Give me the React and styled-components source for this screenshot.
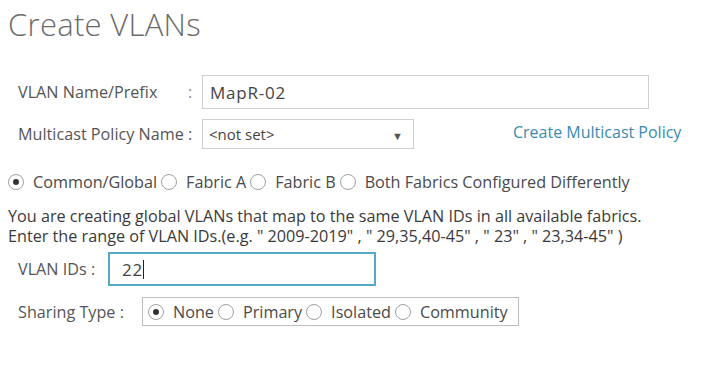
import React from 'react';
import styled, { createGlobalStyle } from 'styled-components';

const GlobalStyle = createGlobalStyle`
  body {
    margin: 0;
    background: #ffffff;
    font-family: "Open Sans", "Liberation Sans", Arial, sans-serif;
    color: #4a4a4a;
  }
`;

const Page = styled.div`
  width: 702px;
  height: 387px;
  padding: 5px 0 0 8px;
  box-sizing: border-box;
  overflow: hidden;
`;

const Title = styled.h1`
  margin: 0;
  font-size: 31px;
  font-weight: 300;
  color: #6b6b6b;
  line-height: 39px;
  letter-spacing: 0.3px;
`;

const Form = styled.div`
  display: flex;
  flex-direction: column;
  margin-top: 31px;
  padding-left: 10px;
`;

const Row = styled.div`
  display: flex;
  align-items: center;
  height: ${(p) => p.h || 34}px;
  margin-top: ${(p) => p.mt || 0}px;
  margin-bottom: ${(p) => p.mb || 0}px;
`;

const Label = styled.span`
  font-size: 16.2px;
  color: #555;
  width: ${(p) => (p.w ? `${p.w}px` : 'auto')};
  flex-shrink: 0;
  white-space: nowrap;
`;

const Colon = styled.span`
  font-size: 16px;
  color: #888;
  width: 14px;
`;

const TextInput = styled.div`
  box-sizing: border-box;
  width: ${(p) => p.w}px;
  height: ${(p) => p.h}px;
  border: ${(p) => (p.focus ? '2px solid #55aacb' : '1px solid #d0d0d0')};
  display: flex;
  align-items: center;
  padding-left: ${(p) => (p.focus ? 12 : 7)}px;
  font-size: 17px;
  color: #444;
  letter-spacing: 0.8px;
`;

const Caret = styled.span`
  display: inline-block;
  width: 1px;
  height: 19px;
  background: #222;
`;

const Select = styled.div`
  box-sizing: border-box;
  width: 212px;
  height: 30px;
  border: 1px solid #d0d0d0;
  display: flex;
  align-items: center;
  justify-content: space-between;
  padding: 0 10px 0 6px;
  font-size: 15px;
  color: #444;
`;

const Arrow = styled.span`
  font-size: 11px;
  color: #555;
  margin-top: 2px;
`;

const Link = styled.a`
  margin-left: 99px;
  font-size: 16px;
  color: #3a8bae;
  text-decoration: none;
  margin-top: -4px;
  white-space: nowrap;
`;

const RadioGroup = styled.div`
  display: flex;
  align-items: center;
  gap: 4px;
  font-size: 16.2px;
  line-height: 20px;
  color: #4a4a4a;
  white-space: nowrap;
`;

const RadioItem = styled.label`
  display: flex;
  align-items: center;
  gap: 9px;
`;

const Circle = styled.span`
  box-sizing: border-box;
  width: 16px;
  height: 16px;
  border-radius: 50%;
  border: 1px solid #a0a0a0;
  display: flex;
  align-items: center;
  justify-content: center;
  &::after {
    content: '';
    width: 6px;
    height: 6px;
    border-radius: 50%;
    background: ${(p) => (p.checked ? '#333' : 'transparent')};
  }
`;

const ScopeRow = styled.div`
  margin: 23px 0 0 -10px;
`;

const Note = styled.p`
  margin: 14px 0 0 -10px;
  font-size: 16.2px;
  line-height: 20px;
  color: #3a3a3a;
  white-space: nowrap;
`;

const ShareBox = styled.div`
  box-sizing: border-box;
  height: 29px;
  width: 377px;
  border: 1px solid #bdbdbd;
  display: flex;
  align-items: center;
  padding-left: 5px;
`;

const Radio = ({ checked, children }) => (
  <RadioItem>
    <Circle checked={checked} />
    {children}
  </RadioItem>
);

export default function App() {
  return (
    <Page>
      <GlobalStyle />
      <Title>Create VLANs</Title>
      <Form>
        <Row h={34} mb={10}>
          <Label w={170}>VLAN Name/Prefix</Label>
          <Colon>:</Colon>
          <TextInput w={447} h={34}>MapR-02</TextInput>
        </Row>
        <Row h={30}>
          <Label w={184}>Multicast Policy Name :</Label>
          <Select>
            <span>&lt;not set&gt;</span>
            <Arrow>▼</Arrow>
          </Select>
          <Link href="#">Create Multicast Policy</Link>
        </Row>
        <ScopeRow>
          <RadioGroup>
            <Radio checked>Common/Global</Radio>
            <Radio>Fabric A</Radio>
            <Radio>Fabric B</Radio>
            <Radio>Both Fabrics Configured Differently</Radio>
          </RadioGroup>
        </ScopeRow>
        <Note>
          You are creating global VLANs that map to the same VLAN IDs in all available fabrics.
          <br />
          Enter the range of VLAN IDs.(e.g. " 2009-2019" , " 29,35,40-45" , " 23" , " 23,34-45" )
        </Note>
        <Row h={34} mt={6} mb={11}>
          <Label w={90}>VLAN IDs :</Label>
          <TextInput w={268} h={34} focus>
            22<Caret />
          </TextInput>
        </Row>
        <Row h={29}>
          <Label w={124}>Sharing Type :</Label>
          <ShareBox>
            <RadioGroup>
              <Radio checked>None</Radio>
              <Radio>Primary</Radio>
              <Radio>Isolated</Radio>
              <Radio>Community</Radio>
            </RadioGroup>
          </ShareBox>
        </Row>
      </Form>
    </Page>
  );
}
